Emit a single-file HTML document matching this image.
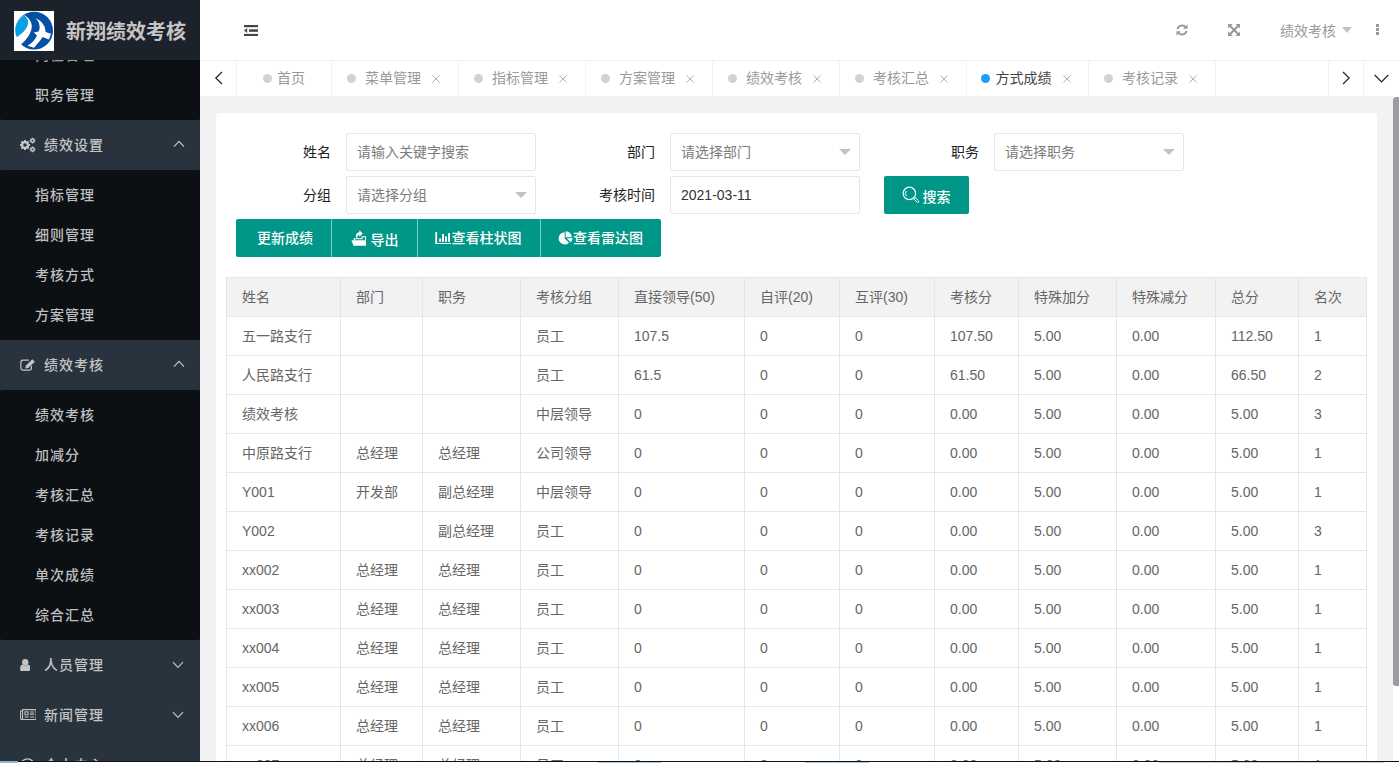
<!DOCTYPE html>
<html lang="zh-CN">
<head>
<meta charset="utf-8">
<title>新翔绩效考核</title>
<style>
*{box-sizing:border-box;margin:0;padding:0}
html,body{width:1399px;height:763px;overflow:hidden;background:#f2f2f2}
body{font-family:"Liberation Sans","Noto Sans CJK SC",sans-serif;font-size:14px;color:#666;position:relative;line-height:1}
.abs{position:absolute}
/* sidebar */
#side{font-weight:500;position:absolute;left:0;top:0;width:200px;height:763px;background:#28333e;overflow:hidden}
#menu{position:absolute;left:0;top:-5px;width:200px}
.child{background:#0c0f14;padding:5px 0;border-radius:2px}
.child div{height:40px;line-height:40px;padding-left:35px;color:#bebebe;font-size:14px;white-space:nowrap;letter-spacing:1px}
.par{height:50px;line-height:50px;position:relative;color:#c4c4c4;font-size:14px;white-space:nowrap}
.par span{position:absolute;left:44px;top:0;letter-spacing:1px}
.par svg.ic{position:absolute}
.par svg.ar{position:absolute;left:173px;top:20px}
#logo{position:absolute;left:0;top:0;width:200px;height:60px;background:#1b222c;box-shadow:0 1px 2px rgba(0,0,0,.25)}
#logo .t{position:absolute;left:66px;top:2px;line-height:60px;font-size:20px;font-weight:bold;color:#c6c4c4;white-space:nowrap}
/* header */
#head{position:absolute;left:200px;top:0;width:1199px;height:60px;background:#fff}
#tabs{position:absolute;left:200px;top:60px;width:1199px;height:36px;background:#fff;border-top:1px solid #f3f3f3}
.tab{position:absolute;top:0;height:35px;line-height:35px;border-right:1px solid #f3f3f3;color:#999;font-size:14px;white-space:nowrap}
.tab i{position:absolute;top:13px;width:9px;height:9px;border-radius:50%;background:#d2d2d2}
.tab b{position:absolute;top:0;font-weight:normal}
.tab svg{position:absolute;top:13px}
/* card */
#card{position:absolute;left:216px;top:113px;width:1161px;height:700px;background:#fff;border-radius:4px}
.lab{position:absolute;width:80px;text-align:right;color:#222;font-size:14px;line-height:38px;height:38px;white-space:nowrap}
.inp{position:absolute;width:190px;height:38px;border:1px solid #e6e6e6;border-radius:2px;background:#fff;line-height:36px;padding-left:10px;color:#7c7c7c;font-size:14px;white-space:nowrap}
.inp .car{position:absolute;right:8.500px;top:14.700px;width:0;height:0;border:6px solid transparent;border-top-color:#c2c2c2}
.btn{position:absolute;height:38px;line-height:38px;background:#009688;color:#fff;font-size:14px;font-weight:500;white-space:nowrap;text-align:center}
table{position:absolute;left:226px;top:277px;border-collapse:collapse;table-layout:fixed;width:1140px;color:#666;font-size:14px}
td,th{border:1px solid #e6e6e6;height:39px;padding:0 15px;text-align:left;font-weight:normal;white-space:nowrap;overflow:hidden;line-height:20px}
th{background:#f2f2f2}
</style>
</head>
<body>
<div id="card"></div>
<div class="lab" style="left:251px;top:133px">姓名</div>
<div class="inp" style="left:346px;top:133px">请输入关键字搜索</div>
<div class="lab" style="left:575px;top:133px">部门</div>
<div class="inp" style="left:670px;top:133px">请选择部门<i class="car"></i></div>
<div class="lab" style="left:899px;top:133px">职务</div>
<div class="inp" style="left:994px;top:133px">请选择职务<i class="car"></i></div>
<div class="lab" style="left:251px;top:176px">分组</div>
<div class="inp" style="left:346px;top:176px">请选择分组<i class="car"></i></div>
<div class="lab" style="left:575px;top:176px">考核时间</div>
<div class="inp" style="left:670px;top:176px;color:#333">2021-03-11</div>
<div class="btn" style="left:884px;top:176px;width:85px;border-radius:2px">
 <svg class="abs" style="left:18px;top:10px" width="18" height="18" viewBox="0 0 18 18"><circle cx="7.400" cy="7.400" r="6.200" fill="none" stroke="#fff" stroke-width="1.200"/><path d="M4.500 5a3.600 3.600 0 0 0 0 5" fill="none" stroke="#fff" stroke-width="1"/><path d="M11.800 12.900l1.400-1.400 3.400 3.400a1 1 0 0 1-1.400 1.400z" fill="none" stroke="#fff" stroke-width="1"/></svg>
 <span class="abs" style="left:38.500px;top:2px">搜索</span>
</div>
<div class="btn" style="left:236px;top:219px;width:95px;border-radius:2px 0 0 2px"><span class="abs" style="left:21px;top:0">更新成绩</span></div>
<div class="btn" style="left:331px;top:219px;width:86px;border-left:1px solid rgba(255,255,255,.5)">
 <svg class="abs" style="left:19px;top:11px" width="16" height="16" viewBox="0 0 16 16"><path d="M.5 10.300H15v5.500H2.500z" fill="#fff"/><path d="M3.300 10V8.800h7.700V6.700h3.500V10" fill="none" stroke="#fff" stroke-width="1.100"/><path d="M5 7.600C4.300 4.500 6 2.500 8.300 2.300V.2l3.500 3.300-3.500 3.300V4.700C7 4.800 6.300 6 6.600 7.600z" fill="#fff"/></svg>
 <span class="abs" style="left:38.500px;top:2px">导出</span>
</div>
<div class="btn" style="left:417px;top:219px;width:123px;border-left:1px solid rgba(255,255,255,.5)">
 <svg class="abs" style="left:17px;top:13px" width="16" height="12" viewBox="0 0 16 12"><path d="M.3 0h1.800v11H16v1H.3z" fill="#fff"/><rect x="4.200" y="6.500" width="1.900" height="3.300" fill="#fff"/><rect x="7" y="2" width="2" height="7.800" fill="#fff"/><rect x="10" y="4.500" width="2" height="5.300" fill="#fff"/><rect x="13" y="1.200" width="2" height="8.600" fill="#fff"/></svg>
 <span class="abs" style="left:33.500px;top:0">查看柱状图</span>
</div>
<div class="btn" style="left:540px;top:219px;width:121px;border-left:1px solid rgba(255,255,255,.5);border-radius:0 2px 2px 0">
 <svg class="abs" style="left:17px;top:12px" width="15" height="14" viewBox="0 0 15 14"><path d="M6.700 1.300v6.200l4.300 4.300A6.100 6.100 0 1 1 6.700 1.300z" fill="#fff"/><path d="M7.700.2a6.100 6.100 0 0 1 6.100 6.100H7.700z" fill="#fff"/><path d="M8.700 7.300h5.900a6.100 6.100 0 0 1-1.800 4.100z" fill="#fff"/></svg>
 <span class="abs" style="left:32px;top:0">查看雷达图</span>
</div>

<table>
<colgroup>
<col style="width:114px">
<col style="width:82px">
<col style="width:98px">
<col style="width:98px">
<col style="width:126px">
<col style="width:95px">
<col style="width:95px">
<col style="width:84px">
<col style="width:98px">
<col style="width:99px">
<col style="width:83px">
<col style="width:68px">
</colgroup>
<thead><tr><th>姓名</th><th>部门</th><th>职务</th><th>考核分组</th><th>直接领导(50)</th><th>自评(20)</th><th>互评(30)</th><th>考核分</th><th>特殊加分</th><th>特殊减分</th><th>总分</th><th>名次</th></tr></thead>
<tbody>
<tr><td>五一路支行</td><td></td><td></td><td>员工</td><td>107.5</td><td>0</td><td>0</td><td>107.50</td><td>5.00</td><td>0.00</td><td>112.50</td><td>1</td></tr>
<tr><td>人民路支行</td><td></td><td></td><td>员工</td><td>61.5</td><td>0</td><td>0</td><td>61.50</td><td>5.00</td><td>0.00</td><td>66.50</td><td>2</td></tr>
<tr><td>绩效考核</td><td></td><td></td><td>中层领导</td><td>0</td><td>0</td><td>0</td><td>0.00</td><td>5.00</td><td>0.00</td><td>5.00</td><td>3</td></tr>
<tr><td>中原路支行</td><td>总经理</td><td>总经理</td><td>公司领导</td><td>0</td><td>0</td><td>0</td><td>0.00</td><td>5.00</td><td>0.00</td><td>5.00</td><td>1</td></tr>
<tr><td>Y001</td><td>开发部</td><td>副总经理</td><td>中层领导</td><td>0</td><td>0</td><td>0</td><td>0.00</td><td>5.00</td><td>0.00</td><td>5.00</td><td>1</td></tr>
<tr><td>Y002</td><td></td><td>副总经理</td><td>员工</td><td>0</td><td>0</td><td>0</td><td>0.00</td><td>5.00</td><td>0.00</td><td>5.00</td><td>3</td></tr>
<tr><td>xx002</td><td>总经理</td><td>总经理</td><td>员工</td><td>0</td><td>0</td><td>0</td><td>0.00</td><td>5.00</td><td>0.00</td><td>5.00</td><td>1</td></tr>
<tr><td>xx003</td><td>总经理</td><td>总经理</td><td>员工</td><td>0</td><td>0</td><td>0</td><td>0.00</td><td>5.00</td><td>0.00</td><td>5.00</td><td>1</td></tr>
<tr><td>xx004</td><td>总经理</td><td>总经理</td><td>员工</td><td>0</td><td>0</td><td>0</td><td>0.00</td><td>5.00</td><td>0.00</td><td>5.00</td><td>1</td></tr>
<tr><td>xx005</td><td>总经理</td><td>总经理</td><td>员工</td><td>0</td><td>0</td><td>0</td><td>0.00</td><td>5.00</td><td>0.00</td><td>5.00</td><td>1</td></tr>
<tr><td>xx006</td><td>总经理</td><td>总经理</td><td>员工</td><td>0</td><td>0</td><td>0</td><td>0.00</td><td>5.00</td><td>0.00</td><td>5.00</td><td>1</td></tr>
<tr><td>xx007</td><td>总经理</td><td>总经理</td><td>员工</td><td>0</td><td>0</td><td>0</td><td>0.00</td><td>5.00</td><td>0.00</td><td>5.00</td><td>1</td></tr>
<tr><td>xx008</td><td>总经理</td><td>总经理</td><td>员工</td><td>0</td><td>0</td><td>0</td><td>0.00</td><td>5.00</td><td>0.00</td><td>5.00</td><td>1</td></tr>
</tbody></table>

<div id="head">
<svg class="abs" style="left:44px;top:25px" width="14" height="11" viewBox="0 0 14 11"><g fill="#444"><rect x="0" y="0" width="14" height="2.200"/><rect x="5" y="4.300" width="9" height="2.500"/><rect x="0" y="8.900" width="14" height="2.100"/><path d="M0 5.500l3.200-2.600v5.200z"/></g></svg>
<svg class="abs" style="left:976px;top:24px" width="12" height="12" viewBox="0 0 13 13"><g fill="none" stroke="#999" stroke-width="2.100"><path d="M1.600 5.600a5 5 0 0 1 8.600-2.300"/><path d="M11.400 7.400a5 5 0 0 1-8.600 2.300"/></g><path d="M12.500 0.400v4.800h-4.800z" fill="#999"/><path d="M0.500 12.600v-4.800h4.800z" fill="#999"/></svg>
<svg class="abs" style="left:1028px;top:24px" width="12.200" height="12" viewBox="0 0 13 13"><g fill="#999"><path d="M0 0h5l-1.700 1.700 3.200 3.200 3.200-3.200L8 0h5v5l-1.700-1.700-3.200 3.200 3.200 3.200L13 8v5H8l1.700-1.700-3.200-3.200-3.200 3.200L5 13H0V8l1.700 1.700 3.200-3.200-3.200-3.200L0 5z"/></g></svg>
<div class="abs" style="left:1080px;top:0.500px;line-height:60px;color:#999;font-size:14px;white-space:nowrap">绩效考核</div>
<div class="abs" style="left:1142px;top:27px;width:0;height:0;border:5.500px solid transparent;border-top:6px solid #c2c2c2;border-bottom:0"></div>
<div class="abs" style="left:1176px;top:24px;width:3px;height:3px;background:#999;box-shadow:0 4px 0 #999,0 8px 0 #999"></div>
</div>
<div id="tabs">
<div class="tab" style="left:0;width:37px"><svg style="left:14px;top:10px" width="9" height="14" viewBox="0 0 9 14"><path d="M8 1L1.800 7 8 13" fill="none" stroke="#222" stroke-width="1.200"/></svg></div>
<div class="tab" style="left:37px;width:95px"><i style="left:26px"></i><b style="left:40px">首页</b></div>
<div class="tab" style="left:132px;width:127px"><i style="left:15px"></i><b style="left:33px">菜单管理</b><svg style="left:100px;top:13.700px" width="8" height="8" viewBox="0 0 8 8"><path d="M0.400 0.400l7.200 7.200M7.600 0.400l-7.200 7.200" stroke="#b0b0b0" stroke-width="1" fill="none"/></svg></div>
<div class="tab" style="left:259px;width:127px"><i style="left:15px"></i><b style="left:33px">指标管理</b><svg style="left:100px;top:13.700px" width="8" height="8" viewBox="0 0 8 8"><path d="M0.400 0.400l7.200 7.200M7.600 0.400l-7.200 7.200" stroke="#b0b0b0" stroke-width="1" fill="none"/></svg></div>
<div class="tab" style="left:386px;width:127px"><i style="left:15px"></i><b style="left:33px">方案管理</b><svg style="left:100px;top:13.700px" width="8" height="8" viewBox="0 0 8 8"><path d="M0.400 0.400l7.200 7.200M7.600 0.400l-7.200 7.200" stroke="#b0b0b0" stroke-width="1" fill="none"/></svg></div>
<div class="tab" style="left:513px;width:127px"><i style="left:15px"></i><b style="left:33px">绩效考核</b><svg style="left:100px;top:13.700px" width="8" height="8" viewBox="0 0 8 8"><path d="M0.400 0.400l7.200 7.200M7.600 0.400l-7.200 7.200" stroke="#b0b0b0" stroke-width="1" fill="none"/></svg></div>
<div class="tab" style="left:640px;width:127px"><i style="left:15px"></i><b style="left:33px">考核汇总</b><svg style="left:100px;top:13.700px" width="8" height="8" viewBox="0 0 8 8"><path d="M0.400 0.400l7.200 7.200M7.600 0.400l-7.200 7.200" stroke="#b0b0b0" stroke-width="1" fill="none"/></svg></div>
<div class="tab" style="left:767px;width:122px;color:#444"><i style="left:14px;background:#1e9fff"></i><b style="left:28.6px">方式成绩</b><svg style="left:95.6px;top:13.700px" width="8" height="8" viewBox="0 0 8 8"><path d="M0.400 0.400l7.200 7.200M7.600 0.400l-7.200 7.200" stroke="#b0b0b0" stroke-width="1" fill="none"/></svg></div>
<div class="tab" style="left:889px;width:127px"><i style="left:15px"></i><b style="left:33px">考核记录</b><svg style="left:100px;top:13.700px" width="8" height="8" viewBox="0 0 8 8"><path d="M0.400 0.400l7.200 7.200M7.600 0.400l-7.200 7.200" stroke="#b0b0b0" stroke-width="1" fill="none"/></svg></div>
<div class="tab" style="left:1128px;width:36px;border-left:1px solid #f3f3f3"><svg style="left:13.300px;top:10px" width="9" height="14" viewBox="0 0 9 14"><path d="M1 1l6.200 6L1 13" fill="none" stroke="#222" stroke-width="1.200"/></svg></div>
<div class="tab" style="left:1164px;width:35px;border-right:0"><svg style="left:10px;top:12.500px" width="15" height="10" viewBox="0 0 15 10"><path d="M0.700 1l6.800 7L14.300 1" fill="none" stroke="#222" stroke-width="1.200"/></svg></div>
</div>

<div id="side">
 <div id="menu">
  <div class="child" style="height:125px;padding-top:40px">
   <div>岗位管理</div>
   <div>职务管理</div>
  </div>
  <div class="par">
   <svg class="ic" style="left:20px;top:17px" width="16" height="16" viewBox="0 0 16 16"><path fill="#c6c6c6" fill-rule="evenodd" d="M8.97 6.98L10.11 7.03L10.11 8.97L8.97 9.02L8.53 10.09L9.30 10.92L7.92 12.30L7.09 11.53L6.02 11.97L5.97 13.11L4.03 13.11L3.98 11.97L2.91 11.53L2.08 12.30L0.70 10.92L1.47 10.09L1.03 9.02L-0.11 8.97L-0.11 7.03L1.03 6.98L1.47 5.91L0.70 5.08L2.08 3.70L2.91 4.47L3.98 4.03L4.03 2.89L5.97 2.89L6.02 4.03L7.09 4.47L7.92 3.70L9.30 5.08L8.53 5.91ZM3.20 8.00a1.80 1.80 0 1 0 3.60 0a1.80 1.80 0 1 0 -3.60 0ZM14.68 3.04L15.35 3.06L15.35 4.14L14.68 4.16L14.44 4.75L14.90 5.23L14.13 6.00L13.65 5.54L13.06 5.78L13.04 6.45L11.96 6.45L11.94 5.78L11.35 5.54L10.87 6.00L10.10 5.23L10.56 4.75L10.32 4.16L9.65 4.14L9.65 3.06L10.32 3.04L10.56 2.45L10.10 1.97L10.87 1.20L11.35 1.66L11.94 1.42L11.96 0.75L13.04 0.75L13.06 1.42L13.65 1.66L14.13 1.20L14.90 1.97L14.44 2.45ZM11.65 3.60a0.85 0.85 0 1 0 1.70 0a0.85 0.85 0 1 0 -1.70 0ZM14.68 11.84L15.35 11.86L15.35 12.94L14.68 12.96L14.44 13.55L14.90 14.03L14.13 14.80L13.65 14.34L13.06 14.58L13.04 15.25L11.96 15.25L11.94 14.58L11.35 14.34L10.87 14.80L10.10 14.03L10.56 13.55L10.32 12.96L9.65 12.94L9.65 11.86L10.32 11.84L10.56 11.25L10.10 10.77L10.87 10.00L11.35 10.46L11.94 10.22L11.96 9.55L13.04 9.55L13.06 10.22L13.65 10.46L14.13 10.00L14.90 10.77L14.44 11.25ZM11.65 12.40a0.85 0.85 0 1 0 1.70 0a0.85 0.85 0 1 0 -1.70 0Z"/></svg>
   <span>绩效设置</span>
   <svg class="ar" width="12" height="8" viewBox="0 0 12 8"><path d="M1 6.600l5-5.200 5 5.200" fill="none" stroke="#c4c4c4" stroke-width="1.150"/></svg>
  </div>
  <div class="child">
   <div>指标管理</div><div>细则管理</div><div>考核方式</div><div>方案管理</div>
  </div>
  <div class="par">
   <svg class="ic" style="left:19.500px;top:18.500px" width="16" height="13" viewBox="0 0 16 13"><path d="M8.800 1.100H3.100A2.200 2.200 0 0 0 .9 3.300v5.700A2.200 2.200 0 0 0 3.100 11.200h6.100A2.200 2.200 0 0 0 11.400 9V6.800" fill="none" stroke="#c4c4c4" stroke-width="1.200"/><path d="M5.200 9.500l.7-2.900L12.300.2l2.500 2.500-6.500 6.200z" fill="#c4c4c4"/></svg>
   <span>绩效考核</span>
   <svg class="ar" width="12" height="8" viewBox="0 0 12 8"><path d="M1 6.600l5-5.200 5 5.200" fill="none" stroke="#c4c4c4" stroke-width="1.150"/></svg>
  </div>
  <div class="child">
   <div>绩效考核</div><div>加减分</div><div>考核汇总</div><div>考核记录</div><div>单次成绩</div><div>综合汇总</div>
  </div>
  <div class="par">
   <svg class="ic" style="left:19.800px;top:18.700px" width="10.500" height="12.400" viewBox="0 0 11 13" preserveAspectRatio="none"><circle cx="5.500" cy="3.400" r="3.300" fill="#c4c4c4"/><path d="M.2 11.200V9.400C.2 7.200 1.500 5.900 3 5.900c.6.600 1.500 1 2.500 1s1.900-.4 2.500-1c1.500 0 2.800 1.300 2.800 3.500v1.800c0 .8-.6 1.300-1.300 1.300h-8c-.7 0-1.300-.5-1.300-1.300z" fill="#c4c4c4"/></svg>
   <span>人员管理</span>
   <svg class="ar" style="left:172.300px;top:21.200px" width="12" height="8" viewBox="0 0 12 8"><path d="M1 1.200l5 5.200 5-5.200" fill="none" stroke="#c4c4c4" stroke-width="1.150"/></svg>
  </div>
  <div class="par">
   <svg class="ic" style="left:19.600px;top:18.900px" width="16.700" height="11.200" viewBox="0 0 17 11.400" preserveAspectRatio="none"><g fill="none" stroke="#c4c4c4" stroke-width="1.100"><path d="M2.600 10.800V.6h13.800v10.200H1.900c-.8 0-1.300-.5-1.300-1.300V2h2"/><rect x="5.100" y="2.900" width="3.200" height="3"/><path d="M10.300 3.100h4.100M10.300 5.200h4.100M4.600 8.100h4.200M10.300 8.100h4.100"/></g></svg>
   <span>新闻管理</span>
   <svg class="ar" style="left:172.300px;top:21.200px" width="12" height="8" viewBox="0 0 12 8"><path d="M1 1.200l5 5.200 5-5.200" fill="none" stroke="#c4c4c4" stroke-width="1.150"/></svg>
  </div>
  <div class="par">
   <svg class="ic" style="left:20px;top:17.500px" width="15" height="15" viewBox="0 0 15 15"><circle cx="7.500" cy="7.500" r="6.700" fill="none" stroke="#c4c4c4" stroke-width="1.200"/></svg>
   <span>个人中心</span>
  </div>
 </div>
 <div id="logo">
  <svg class="abs" style="left:14px;top:11px" width="40" height="40" viewBox="0 0 40 40"><rect width="40" height="40" fill="#fff"/><circle cx="20.100" cy="19.700" r="18.900" fill="#0450a3"/><path d="M10.600 4.300C4 8 .5 15 1.300 22L0 27l5.500 8.500 2.300-2.700C13 28 17.500 22 17.800 15.500 18 11 14.500 6.500 10.600 4.300z" fill="#fff"/><path d="M10.400 4.500C4.500 8 .8 14 1.300 20.500c.1 2 .6 4 1.500 5.700C8 23 13.500 17.500 14.200 12.100 14.300 9 12.500 6 10.400 4.500z" fill="#04a0e6"/><path d="M21.700 7.400C24.500 8 28.500 11 30.500 15.500c.7 2 1 4 1 5.500l5.600 1.800-2.200 5.600-6.400-2.400c-1 2-2.700 4-4.500 6-1.500 1.800-2.800 3.500-4 4.700L13.500 34.700c2-1.200 4-2.700 6-4.700 1.500-1.700 2.700-3.500 3.500-5.500l-3.200-3 4.700-1c.8-1.400 1.200-3 1.100-4.500-.1-1.800-.5-3.300-.8-4.500-.7-1.500-1.800-3-3.100-4.100z" fill="#fff"/></svg>
  <div class="t">新翔绩效考核</div>
 </div>
</div>

<div class="abs" style="left:0;top:761px;width:1399px;height:1px;background:#111"></div>
<div class="abs" style="left:0;top:762px;width:1399px;height:1px;background:#fff"></div>
<div class="abs" style="left:0;top:761px;width:18px;height:2px;background:#8fb4d8"></div>
<div class="abs" style="left:598px;top:762px;width:63px;height:1px;background:#a9c9ea"></div>
<div class="abs" style="left:1393px;top:96px;width:6px;height:665px;background:#fff"></div>
<div class="abs" style="left:1393px;top:97px;width:7px;height:589px;background:#9b9ca0;border-radius:3px 0 0 3px"></div>
<div class="abs" style="left:805px;top:762px;width:64px;height:1px;background:#a9c9ea"></div>
<div class="abs" style="left:1159px;top:762px;width:225px;height:1px;background:#c3d0e0"></div>

</body>
</html>
